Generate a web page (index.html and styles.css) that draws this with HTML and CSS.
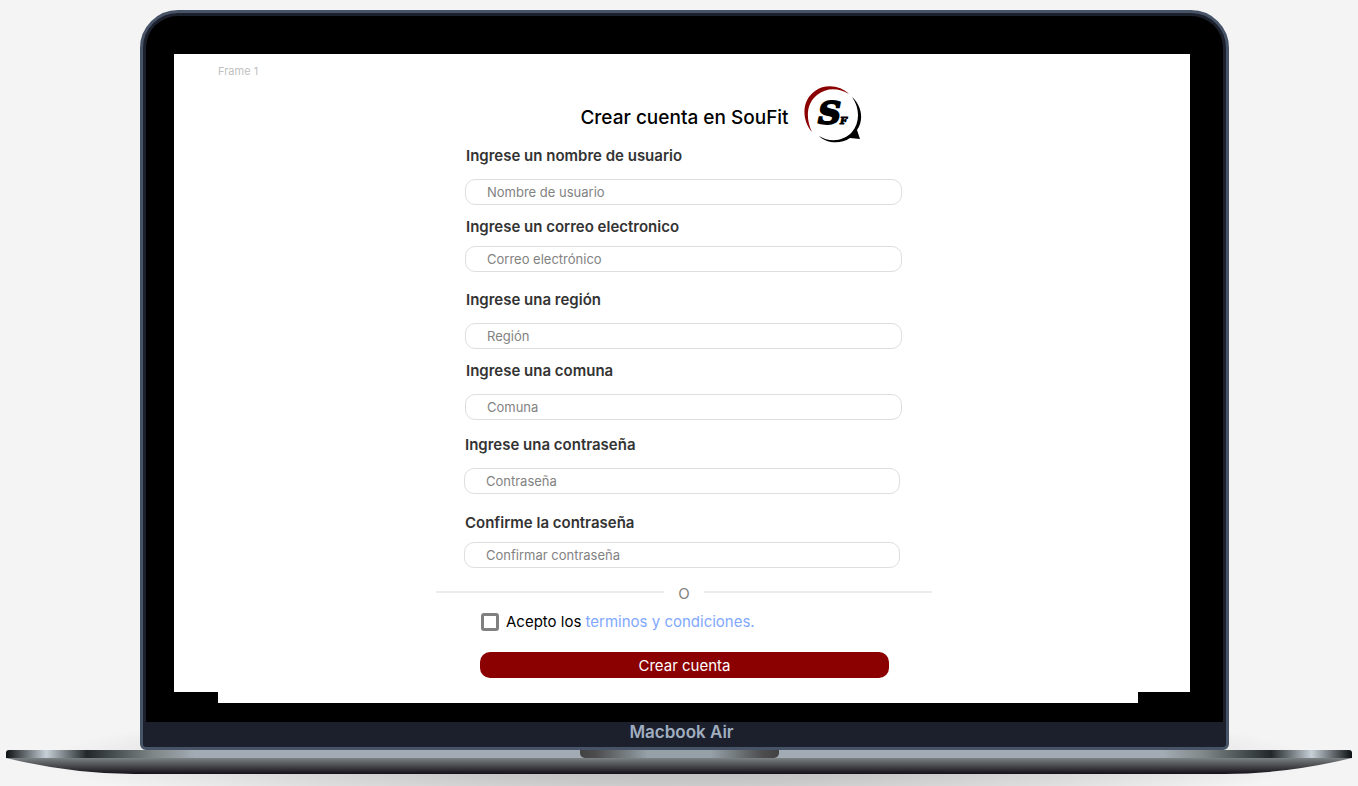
FILE: index.html
```html
<!DOCTYPE html>
<html lang="es">
<head>
<meta charset="utf-8">
<meta name="viewport" content="width=device-width, initial-scale=1">
<title>Crear cuenta en SouFit</title>
<link rel="stylesheet" href="styles.css">
</head>
<body>
<div class="laptop">
  <div class="lid">
    <div class="bezel">
      <main class="screen">
        <p class="frame-name">Frame 1</p>
        <form class="signup">
          <header class="heading">
            <h1 class="title">Crear cuenta en SouFit</h1>
            <svg class="logo" viewBox="0 0 58 58" role="img" aria-label="SouFit">
              <path fill="#8b0000" d="M8 46C-3 33-2 14 11 5C22-3 37 0 45 8C35 2 23 1 13 9C3 17 1 31 8 46Z"/>
              <path d="M48 11C58 20 60 34 53 44L56 53L46 52C36 59 22 57 15 50C26 57 40 55 48 46C56 37 56 22 48 11Z"/>
              <text class="logo-s" x="14" y="38">S</text>
              <text class="logo-f" x="36" y="38">F</text>
            </svg>
          </header>
          <div class="fields">
            <div class="field">
              <label for="usuario">Ingrese un nombre de usuario</label>
              <input id="usuario" type="text" placeholder="Nombre de usuario">
            </div>
            <div class="field field-tight">
              <label for="correo">Ingrese un correo electronico</label>
              <input id="correo" type="email" placeholder="Correo electrónico">
            </div>
            <div class="field field-region">
              <label for="region">Ingrese una región</label>
              <input id="region" type="text" placeholder="Región">
            </div>
            <div class="field">
              <label for="comuna">Ingrese una comuna</label>
              <input id="comuna" type="text" placeholder="Comuna">
            </div>
          </div>
          <div class="fields passwords">
            <div class="field">
              <label for="clave">Ingrese una contraseña</label>
              <input id="clave" type="password" placeholder="Contraseña">
            </div>
            <div class="field field-tight field-confirm">
              <label for="confirmar">Confirme la contraseña</label>
              <input id="confirmar" type="password" placeholder="Confirmar contraseña">
            </div>
          </div>
          <div class="divider"><span>O</span></div>
          <div class="terms">
            <input id="acepto" type="checkbox">
            <label for="acepto">Acepto los <a href="#terminos">terminos y condiciones.</a></label>
          </div>
          <button class="submit" type="submit">Crear cuenta</button>
        </form>
      </main>
      <div class="screen-foot"></div>
    </div>
    <p class="model">Macbook Air</p>
  </div>
  <div class="base">
    <div class="deck"><div class="notch"></div></div>
    <svg class="underside" viewBox="0 0 1346 16" preserveAspectRatio="none" aria-hidden="true">
      <defs>
        <linearGradient id="metal" x1="0" y1="0" x2="0" y2="1">
          <stop offset="0" stop-color="#7c8184"/>
          <stop offset=".5" stop-color="#484a4d"/>
          <stop offset="1" stop-color="#130f17"/>
        </linearGradient>
      </defs>
      <path fill="url(#metal)" d="M0 0H1346Q1280 16 1218 16H128Q66 16 0 0Z"/>
    </svg>
  </div>
</div>
</body>
</html>
```
FILE: styles.css
```css
* {
  box-sizing: border-box;
}

body {
  margin: 0;
  padding: 10px 6px 12px;
  background: #f4f4f4;
  color: #000;
  font-family: Inter, "Liberation Sans", sans-serif;
  overflow: hidden;
}

h1,
p {
  margin: 0;
}

.laptop {
  position: relative;
  z-index: 0;
}

.laptop::before {
  content: "";
  position: absolute;
  z-index: -1;
  left: 3%;
  right: 3%;
  bottom: -44px;
  height: 116px;
  background: radial-gradient(closest-side, #b8b8b8, #c8c8c8 40%, #dcdcdc 70%, #f4f4f4);
}

.lid {
  margin: 0 123px 0 134px;
  border: 3px solid #475467;
  border-radius: 38px 38px 6px 6px;
  padding: 3px 3px 0;
  background: #1b202c;
}

.bezel {
  padding: 38px 33px 19px 28px;
  border-radius: 32px 32px 0 0;
  background: #000;
}

.screen {
  padding: 10px 0 14px 4px;
  background: #fff;
}

.screen-foot {
  height: 11px;
  margin: 0 52px 0 44px;
  background: #fff;
}

.frame-name {
  padding-left: 40px;
  color: #bfbfbf;
  font-size: 11px;
  line-height: 14px;
}

.signup {
  display: flex;
  flex-direction: column;
  max-width: 496px;
  margin: 8px auto 0;
}

.heading {
  display: flex;
  align-items: center;
  justify-content: center;
  gap: 15px;
  padding-left: 74px;
}

.title {
  padding-top: 6px;
  font-size: 19px;
  font-weight: 500;
  line-height: 24px;
}

.logo {
  width: 58px;
  height: 58px;
}

.logo-s,
.logo-f {
  font-family: "DejaVu Serif", serif;
  font-style: italic;
  font-weight: 700;
  stroke: #000;
}

.logo-s {
  font-size: 32px;
  stroke-width: 2px;
}

.logo-f {
  font-size: 10px;
  stroke-width: 1px;
}

.fields {
  padding: 2px 30px 0 29px;
}

.passwords {
  padding: 15px 32px 0 28px;
}

.field {
  display: flex;
  flex-direction: column;
  gap: 13px;
}

.field + .field {
  margin-top: 12px;
}

.field-tight {
  gap: 9px;
}

.field + .field-region {
  margin-top: 18px;
}

.field + .field-confirm {
  margin-top: 19px;
}

.field label {
  padding-left: 1px;
  color: #333;
  font-size: 15px;
  font-weight: 600;
  line-height: 20px;
}

.field input {
  width: 100%;
  height: 26px;
  padding: 0 21px;
  border: 1px solid #dedede;
  border-radius: 10px;
  background: #fff;
  color: #333;
  font-family: inherit;
  font-size: 13px;
}

.field input::placeholder {
  color: #828282;
  opacity: 1;
}

.divider {
  display: flex;
  align-items: center;
  gap: 14px;
  margin-top: 14px;
  color: #828282;
  font-size: 15px;
  line-height: 16px;
}

.divider span {
  padding-top: 4px;
}

.divider::before,
.divider::after {
  content: "";
  flex: 1;
  height: 2px;
  background: #ebebeb;
}

.terms {
  display: flex;
  align-items: center;
  gap: 7px;
  margin-top: 10px;
  padding-left: 45px;
  font-size: 15px;
  line-height: 20px;
}

.terms input {
  appearance: none;
  width: 18px;
  height: 18px;
  margin: 0;
  border: 3px solid #808080;
  border-radius: 3px;
  background: #fff;
}

.terms input:checked {
  background: #8b0000;
}

.terms a {
  color: #7fa8ff;
  text-decoration: none;
}

.submit {
  height: 26px;
  margin: 20px 43px 0 44px;
  padding: 0;
  border: 0;
  border-radius: 10px;
  background: #8b0000;
  color: #fff;
  font-family: inherit;
  font-size: 15px;
}

.model {
  padding: 0 6px 5px 0;
  color: #a0aec0;
  font-size: 17px;
  font-weight: 600;
  line-height: 20px;
  text-align: center;
}

.deck {
  height: 8px;
  border-radius: 3px 3px 0 0;
  background: linear-gradient(90deg, #0c1012, #c7d0d7 3%, #22282a 6%, #7f8787 11%, #a2aab3 14%, #a2aab3 86%, #7f8787 89%, #22282a 94%, #c7d0d7 97%, #0c1012);
}

.notch {
  width: 199px;
  height: 8px;
  margin: 0 auto;
  border-radius: 0 0 5px 5px;
  background: linear-gradient(90deg, #414141, #4c4c4c 8%, #95a0a7 34%, #95a0a7 66%, #4c4c4c 92%, #414141);
}

.underside {
  display: block;
  width: 100%;
  height: 16px;
}
```
